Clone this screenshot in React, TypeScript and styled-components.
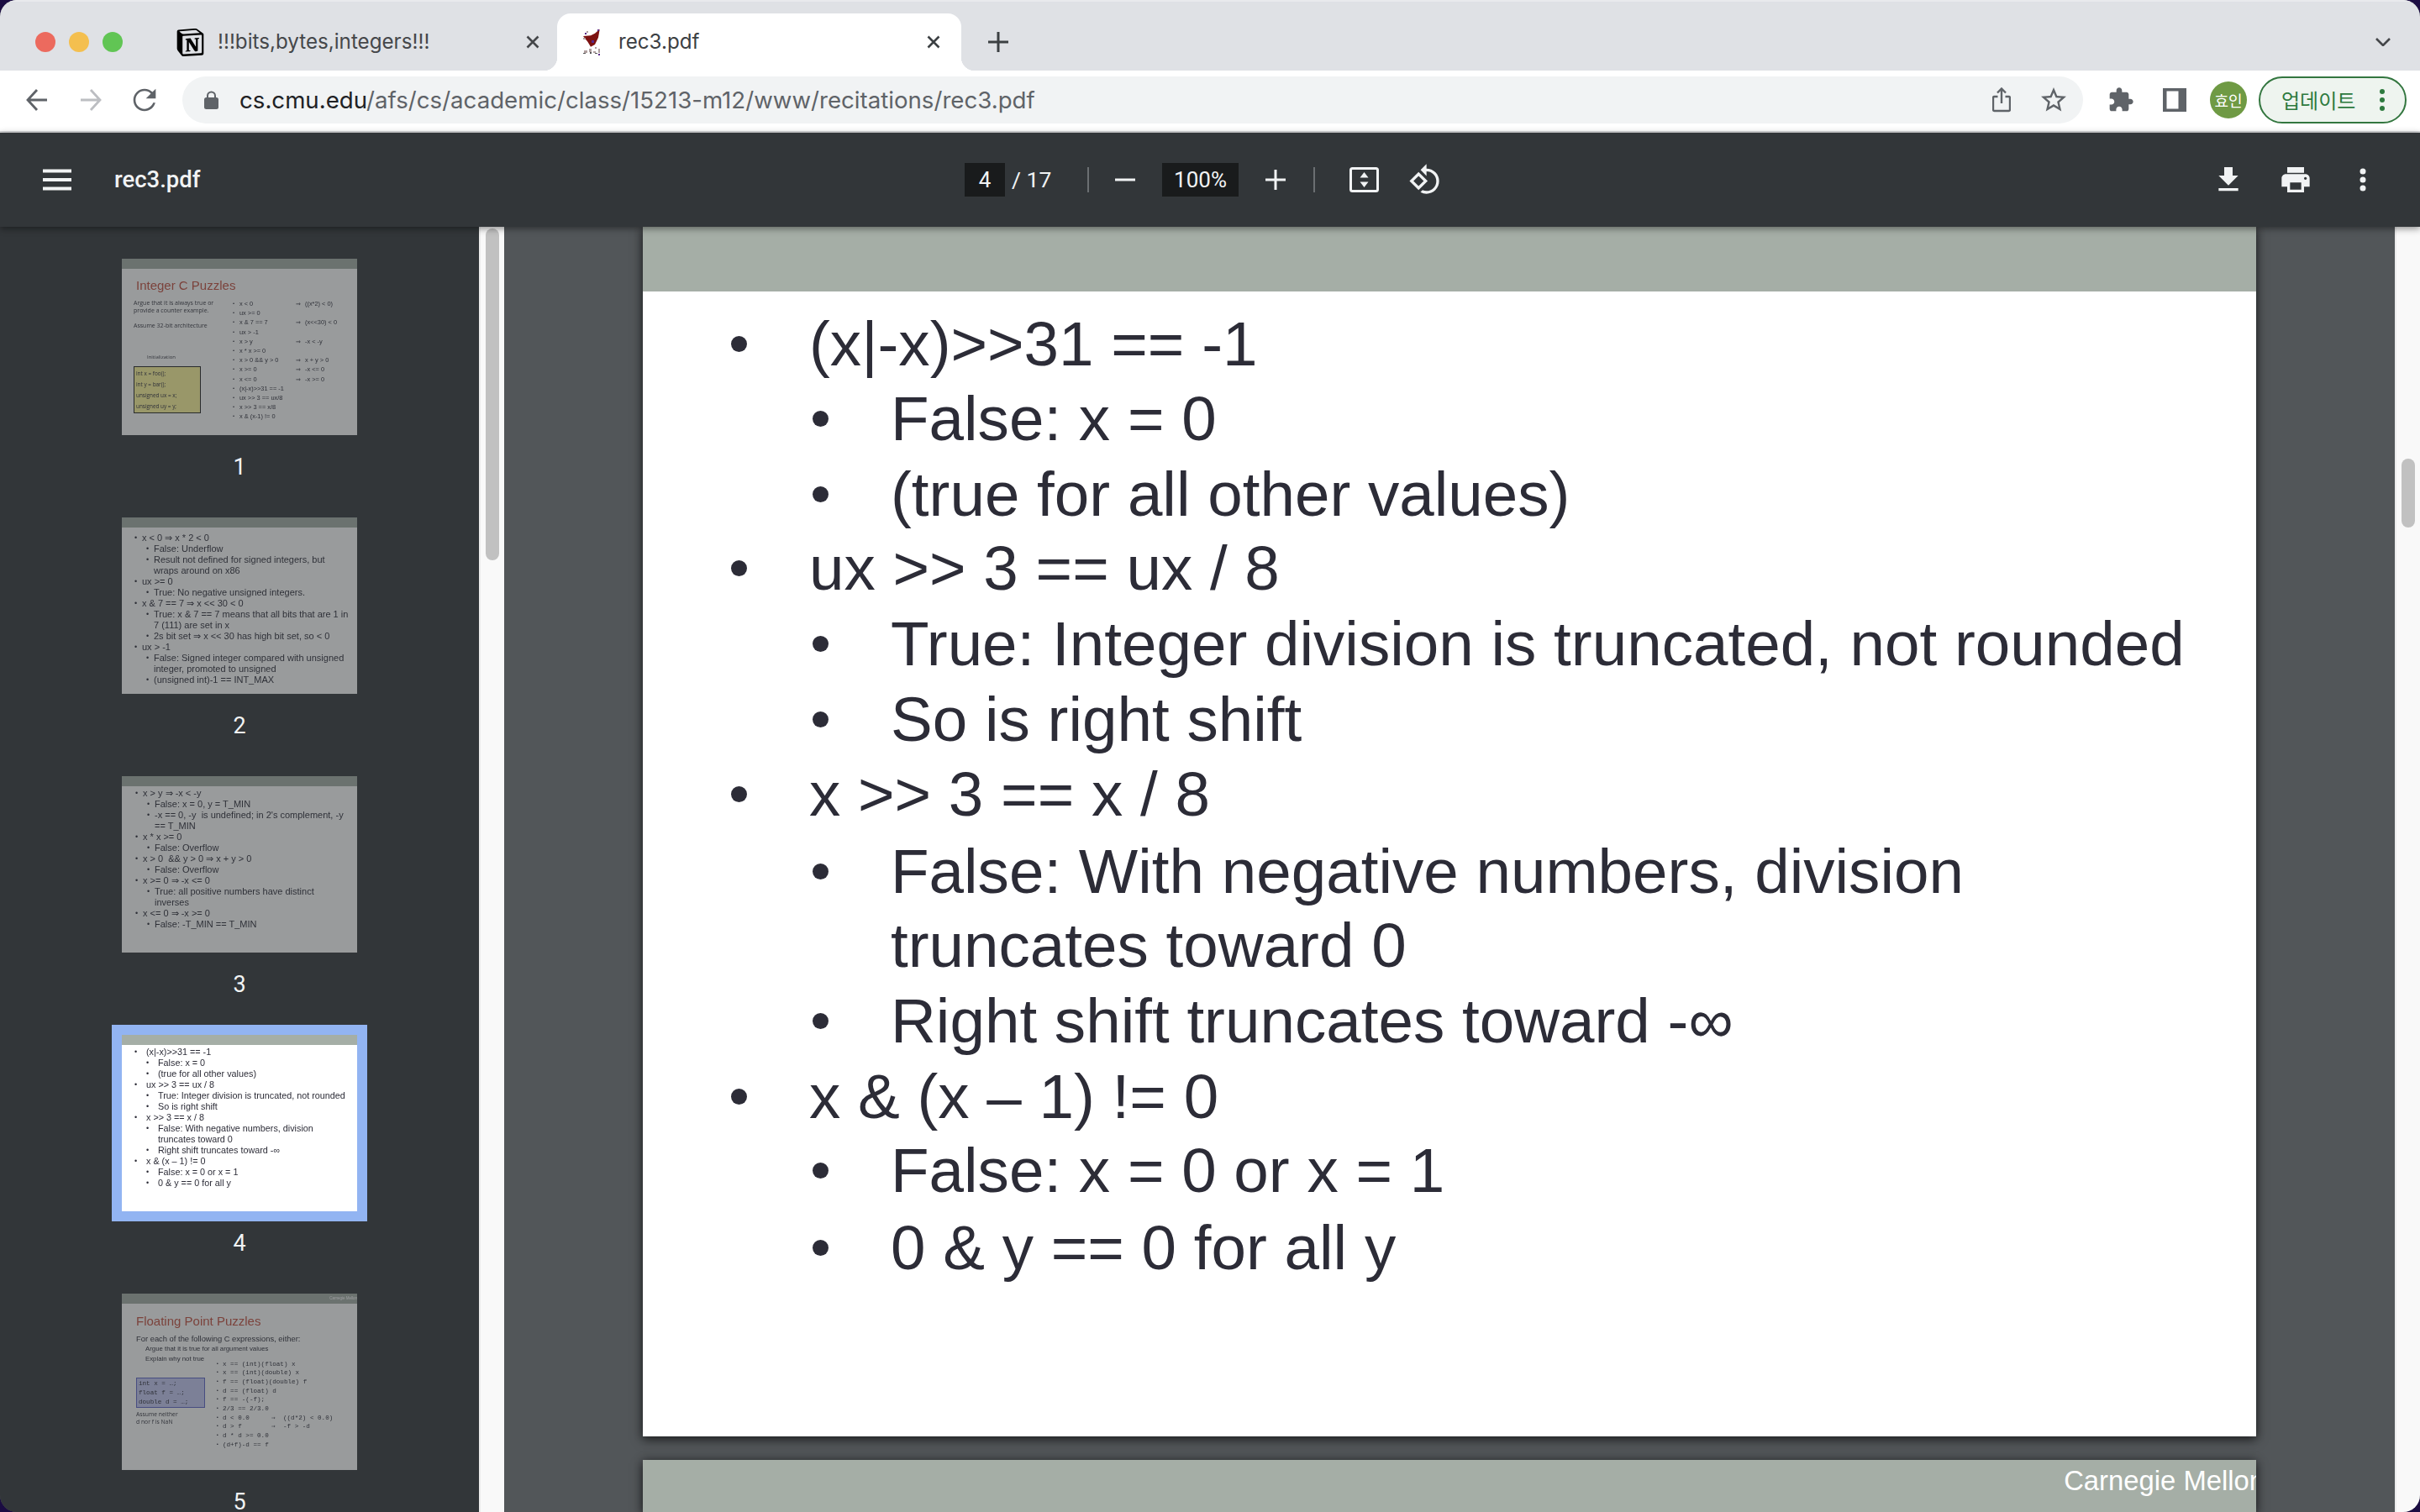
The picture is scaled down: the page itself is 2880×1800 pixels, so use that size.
import React from "react";
import styled, { createGlobalStyle } from "styled-components";
import { SiNotion } from "react-icons/si";

const Global = createGlobalStyle`
  html, body { margin: 0; padding: 0; background: #1b0c42; }
  body { width: 2880px; height: 1800px; overflow: hidden; font-family: "Roboto", "Liberation Sans", sans-serif; }
  * { box-sizing: border-box; }
`;

const Win = styled.div`
  width: 2880px; height: 1800px; border-radius: 20px; overflow: hidden;
  display: flex; flex-direction: column; background: #525659;
`;

/* ---------- tab strip ---------- */
const TabStrip = styled.div`
  height: 84px; flex: none; display: flex; align-items: flex-end; background: #dfe1e5;
  border-top: 2px solid #e9eaed;
`;
const Lights = styled.div`
  display: flex; gap: 16px; align-self: flex-start; margin: 36px 44px 0 42px;
`;
const Light = styled.span<{ $c: string }>`
  width: 24px; height: 24px; border-radius: 50%; background: ${p => p.$c};
`;
const Tab = styled.div<{ $active?: boolean }>`
  width: ${p => (p.$active ? 481 : 473)}px; height: 68px; display: flex; align-items: center;
  padding: ${p => (p.$active ? "0 25px 0 30px" : "0 21px 0 20px")};
  gap: ${p => (p.$active ? 19 : 16)}px;
  position: relative;
  background: ${p => (p.$active ? "#fff" : "transparent")};
  border-radius: 16px 16px 0 0;
  color: ${p => (p.$active ? "#3c4043" : "#45474a")};
  ${p => p.$active && `
    &::before, &::after {
      content: ""; position: absolute; bottom: 0; width: 16px; height: 16px;
    }
    &::before { left: -16px; background: radial-gradient(circle at 0 0, transparent 16px, #fff 16.5px); }
    &::after { right: -16px; background: radial-gradient(circle at 100% 0, transparent 16px, #fff 16.5px); }
  `}
`;
const TabTitle = styled.span`
  flex: 1; font: 400 24.2px/32px "Inter", sans-serif; white-space: nowrap; overflow: hidden;
`;
const NewTab = styled.svg`
  width: 24px; height: 24px; margin: 0 0 22px 32px; flex: none;
`;
const TabMenu = styled.svg`
  width: 18px; height: 10px; margin: 0 35px 29px auto; flex: none;
`;

/* ---------- browser toolbar ---------- */
const BrowserBar = styled.div`
  height: 74px; flex: none; display: flex; align-items: center; background: #fff;
  border-bottom: 2px solid #d8d9db; padding-bottom: 2px;
`;
const NavIcon = styled.svg<{ $w: number; $ml: number }>`
  width: ${p => p.$w}px; height: 40px; margin-left: ${p => p.$ml}px; flex: none;
`;
const Omnibox = styled.div`
  width: 2262px; height: 56px; margin-left: 25px; border-radius: 28px; background: #f1f3f4;
  display: flex; align-items: center; padding-left: 26px; flex: none;
`;
const Url = styled.div`
  font: 400 27.65px/36px "Inter", sans-serif; color: #5f6368; margin-left: 25px; white-space: nowrap;
`;
const Domain = styled.span` color: #202124; `;
const OmniActions = styled.div`
  margin-left: auto; display: flex; align-items: center; padding-right: 17px; gap: 33px;
`;
const BarIcon = styled.svg<{ $s: number; $ml: number }>`
  width: ${p => p.$s}px; height: ${p => p.$s}px; margin-left: ${p => p.$ml}px; flex: none;
`;
const ActionGlyph = styled.svg<{ $w: number; $h: number }>`
  width: ${p => p.$w}px; height: ${p => p.$h}px; flex: none;
`;
const Avatar = styled.div`
  width: 44px; height: 44px; margin-left: 28px; border-radius: 50%; background: #6f9a44; color: #fff; flex: none;
  display: flex; align-items: center; justify-content: center;
  font: 400 18px/44px "Noto Sans CJK KR", sans-serif;
`;
const UpdatePill = styled.div`
  width: 176px; height: 56px; margin-left: 14px; border-radius: 28px; flex: none;
  border: 2px solid #33763f; background: #eef4ef; color: #2d7a3e;
  display: flex; align-items: center; padding-left: 25px;
  font: 400 24px/30px "Noto Sans CJK KR", sans-serif;
`;
const PillDots = styled.svg`
  width: 8px; height: 28px; margin-left: 28px; flex: none;
`;

/* ---------- pdf toolbar ---------- */
const PdfBar = styled.div`
  height: 112px; flex: none; display: flex; align-items: center; background: #323639; color: #f1f3f4;
  position: relative; z-index: 3; box-shadow: 0 2px 8px rgba(0,0,0,.45);
`;
const PdfLeft = styled.div`
  width: 1148px; display: flex; align-items: center; padding-left: 51px; flex: none;
`;
const Burger = styled.svg` width: 34px; height: 26px; flex: none; `;
const DocName = styled.div`
  margin-left: 51px; font: 500 27.5px/36px "Roboto", sans-serif; color: #f1f3f4;
`;
const NumBox = styled.div<{ $w: number; $ml?: number }>`
  width: ${p => p.$w}px; height: 40px; margin-left: ${p => p.$ml ?? 0}px; background: #191b1c; flex: none;
  display: flex; align-items: center; justify-content: center;
  font: 400 26px/40px "Roboto", sans-serif; color: #f1f3f4;
`;
const PageTotal = styled.div`
  width: 48px; margin-left: 8px; flex: none; font: 400 26.5px/40px "Roboto", sans-serif; white-space: nowrap; color: #f1f3f4;
`;
const Sep = styled.div<{ $ml: number }>`
  width: 2px; height: 30px; margin-left: ${p => p.$ml}px; background: #6b6f72; flex: none;
`;
const ToolIcon = styled.svg<{ $w: number; $ml: number }>`
  width: ${p => p.$w}px; height: 40px; margin-left: ${p => p.$ml}px; flex: none;
`;
const PdfRight = styled.div`
  margin-left: auto; padding-right: 48px; display: flex; gap: 40px; align-items: center;
`;
const ActionIcon = styled.svg`
  width: 40px; height: 40px; flex: none;
`;

/* ---------- body ---------- */
const Body = styled.div`
  flex: 1; min-height: 0; display: flex;
`;
const Sidebar = styled.aside`
  width: 570px; flex: none; background: #323639; padding-top: 38px; overflow: hidden;
  display: flex; flex-direction: column; align-items: center;
`;
const ThumbItem = styled.div`
  height: 308px; flex: none; display: flex; flex-direction: column; align-items: center;
`;
const ThumbLabel = styled.div`
  margin-top: 22px; font: 400 27px/32px "Roboto", sans-serif; color: #f1f3f4;
`;
const ThumbFrame = styled.div<{ $on?: boolean }>`
  width: 280px; height: 210px; flex: none; background: #fff; overflow: hidden;
  display: flex; flex-direction: column; color: #2c2c37;
  outline: ${p => (p.$on ? "12px solid #92b4f2" : "none")};
  opacity: ${p => (p.$on ? 1 : 0.5)};
  font-family: "Liberation Sans", sans-serif;
`;
const ThumbBandBox = styled.div`
  height: 12px; flex: none; background: #a5aea6; color: #fff;
  display: flex; justify-content: flex-end; align-items: center; overflow: hidden;
  font: 400 4.5px/8px "Liberation Sans", sans-serif; filter: blur(.3px);
`;
const ThumbBody = styled.div<{ $pt: number }>`
  padding-top: ${p => p.$pt}px; filter: blur(.45px);
`;
const ThumbRow = styled.div<{ $lvl: number; $x: number; $sub: number; $size: number; $h: number }>`
  height: ${p => p.$h}px; display: flex; align-items: center; white-space: pre;
  font-size: ${p => p.$size}px; line-height: ${p => p.$h}px;
  padding-left: ${p => (p.$lvl ? p.$x + p.$sub : p.$x)}px;
`;
const ThumbDot = styled.span<{ $w: number }>`
  width: ${p => p.$w}px; flex: none; font-size: 9px;
`;
const Title = styled.div<{ $size: number; $pt: number; $h: number }>`
  padding: ${p => p.$pt}px 0 0 17px; color: #c4503f; white-space: nowrap;
  font: 400 ${p => p.$size}px/${p => p.$h}px "Liberation Sans", sans-serif; filter: blur(.3px);
`;
const Columns = styled.div<{ $pt: number }>`
  display: flex; padding-top: ${p => p.$pt}px; filter: blur(.45px);
`;
const NoteCol = styled.div<{ $w: number; $pl: number }>`
  width: ${p => p.$w}px; padding-left: ${p => p.$pl}px; flex: none;
`;
const Note = styled.div<{ $mt?: number; $ml?: number; $size?: number }>`
  font: 400 ${p => p.$size ?? 7}px/9px "Open Sans", sans-serif; white-space: nowrap; color: #33333c;
  margin-top: ${p => p.$mt ?? 0}px; margin-left: ${p => p.$ml ?? 0}px;
`;
const InitBox = styled.div`
  width: 80px; height: 56px; margin-top: 6px; background: #fff79a; border: 1.5px solid #222;
  display: flex; flex-direction: column; justify-content: space-around; padding: 1px 2px;
  font: 400 6.4px/10px "Open Sans", sans-serif;
`;
const DeclBox = styled.div`
  width: 82px; height: 36px; margin: 17px 0 3px; background: #c5c9f5; border: 1px solid #5c64c8;
  display: flex; flex-direction: column; justify-content: space-around; padding: 1px 2px;
  font: 400 7.6px/10px "Liberation Mono", monospace;
`;
const PuzzleGrid = styled.div<{ $cols: string; $rh: number; $size: number; $mono?: boolean; $mt?: number }>`
  display: grid; grid-template-columns: ${p => p.$cols}; grid-auto-rows: ${p => p.$rh}px; align-items: center;
  margin-top: ${p => p.$mt ?? 0}px;
  font: 400 ${p => p.$size}px/${p => p.$rh}px ${p => (p.$mono ? '"Liberation Mono", monospace' : '"Liberation Sans", sans-serif')};
  white-space: pre;
`;
const GridDot = styled.span` font-size: 6px; `;
const Tiny = styled.div<{ $size: number; $h: number; $lvl?: number }>`
  font: 400 ${p => p.$size}px/${p => p.$h}px "Liberation Sans", sans-serif; white-space: nowrap;
  padding-left: ${p => (p.$lvl ? 11 : 0)}px;
`;
const TopList = styled.div`
  padding-left: 17px;
`;
const Foot = styled.div`
  display: flex;
`;

const ScrollTrack = styled.div`
  width: 30px; flex: none; background: #f9f9f9; border-left: 2px solid #ececec; position: relative; z-index: 1;
`;
const ScrollThumb = styled.div<{ $mt: number; $h: number }>`
  width: 16px; height: ${p => p.$h}px; margin: ${p => p.$mt}px 0 0 6px; border-radius: 8px; background: #c1c1c1;
`;
const Viewer = styled.main`
  flex: 1; min-width: 0; background: #525659; overflow: hidden; display: flex; flex-direction: column; align-items: center; gap: 28px;
`;
const Page = styled.section`
  width: 1920px; flex: none; background: #fff; box-shadow: 0 4px 12px rgba(0,0,0,.55), 0 0 10px rgba(0,0,0,.3);
`;
const PageBand = styled.div<{ $h: number }>`
  height: ${p => p.$h}px; background: #a5aea6; color: #fff; overflow: hidden;
  display: flex; justify-content: flex-end; align-items: flex-start;
`;
const BandText = styled.span`
  font: 400 32.8px/50px "Liberation Sans", sans-serif; white-space: nowrap; margin-right: -10px;
`;
const SlideBody = styled.div`
  height: 1363px; padding-top: 18px;
`;
const SlideLine = styled.div<{ $lvl: number; $gap: number }>`
  height: 88px; margin-top: ${p => p.$gap}px; display: flex; align-items: center; white-space: pre;
  padding-left: ${p => (p.$lvl ? 202 : 105)}px; color: #2c2c37;
  font: 400 74.6px/88px "Liberation Sans", sans-serif;
`;
const SlideDot = styled.span<{ $show: boolean }>`
  width: 19px; height: 19px; margin-right: 74px; flex: none; border-radius: 50%;
  background: ${p => (p.$show ? "#2c2c37" : "transparent")};
`;
const Favicon = styled.svg`
  width: 24px; height: 32px; flex: none;
`;
const CloseGlyph = styled.svg`
  width: 16px; height: 16px; flex: none;
`;

/* ---------- data ---------- */
const slide: { t: string; l: number; c: number; nb?: boolean }[] = [
  { t: "(x|-x)>>31 == -1", l: 0, c: 408 },
  { t: "False: x = 0", l: 1, c: 497 },
  { t: "(true for all other values)", l: 1, c: 587 },
  { t: "ux >> 3 == ux / 8", l: 0, c: 675 },
  { t: "True: Integer division is truncated, not rounded", l: 1, c: 765 },
  { t: "So is right shift", l: 1, c: 855 },
  { t: "x >> 3 == x / 8", l: 0, c: 944 },
  { t: "False: With negative numbers, division", l: 1, c: 1036 },
  { t: "truncates toward 0", l: 1, c: 1124, nb: true },
  { t: "Right shift truncates toward -∞", l: 1, c: 1214 },
  { t: "x & (x – 1) != 0", l: 0, c: 1304 },
  { t: "False: x = 0 or x = 1", l: 1, c: 1392 },
  { t: "0 & y == 0 for all y", l: 1, c: 1484 },
];

type TL = [string, number, boolean?];
const thumb2: TL[] = [
  ["x < 0 ⇒ x * 2 < 0", 0], ["False: Underflow", 1], ["Result not defined for signed integers, but", 1],
  ["wraps around on x86", 1, true], ["ux >= 0", 0], ["True: No negative unsigned integers.", 1],
  ["x & 7 == 7 ⇒ x << 30 < 0", 0], ["True: x & 7 == 7 means that all bits that are 1 in", 1], ["7 (111) are set in x", 1, true],
  ["2s bit set ⇒ x << 30 has high bit set, so < 0", 1], ["ux > -1", 0], ["False: Signed integer compared with unsigned", 1],
  ["integer, promoted to unsigned", 1, true], ["(unsigned int)-1 == INT_MAX", 1],
];
const thumb3: TL[] = [
  ["x > y ⇒ -x < -y", 0], ["False: x = 0, y = T_MIN", 1], ["-x == 0, -y  is undefined; in 2's complement, -y", 1],
  ["== T_MIN", 1, true], ["x * x >= 0", 0], ["False: Overflow", 1], ["x > 0  && y > 0 ⇒ x + y > 0", 0], ["False: Overflow", 1],
  ["x >= 0 ⇒ -x <= 0", 0], ["True: all positive numbers have distinct", 1], ["inverses", 1, true], ["x <= 0 ⇒ -x >= 0", 0],
  ["False: -T_MIN == T_MIN", 1],
];
const thumb4: TL[] = [
  ["(x|-x)>>31 == -1", 0], ["False: x = 0", 1], ["(true for all other values)", 1], ["ux >> 3 == ux / 8", 0],
  ["True: Integer division is truncated, not rounded", 1], ["So is right shift", 1], ["x >> 3 == x / 8", 0],
  ["False: With negative numbers, division", 1], ["truncates toward 0", 1, true], ["Right shift truncates toward -∞", 1],
  ["x & (x – 1) != 0", 0], ["False: x = 0 or x = 1", 1], ["0 & y == 0 for all y", 1],
];
const puzzles: [string, string?][] = [
  ["x < 0", "((x*2) < 0)"], ["ux >= 0"], ["x & 7 == 7", "(x<<30) < 0"], ["ux > -1"], ["x > y", "-x < -y"], ["x * x >= 0"],
  ["x > 0 && y > 0", "x + y > 0"], ["x >= 0", "-x <= 0"], ["x <= 0", "-x >= 0"], ["(x|-x)>>31 == -1"], ["ux >> 3 == ux/8"],
  ["x >> 3 == x/8"], ["x & (x-1) != 0"],
];
const floats: [string, string?][] = [
  ["x == (int)(float) x"], ["x == (int)(double) x"], ["f == (float)(double) f"], ["d == (float) d"], ["f == -(-f);"],
  ["2/3 == 2/3.0"], ["d < 0.0", "((d*2) < 0.0)"], ["d > f", "-f > -d"], ["d * d >= 0.0"], ["(d+f)-d == f"],
];

const ListThumb = ({ rows, x, dot, sub, pt, size = 11 }: { rows: TL[]; x: number; dot: number; sub: number; pt: number; size?: number }) => (
  <ThumbBody $pt={pt}>
    {rows.map(([t, l, nb], i) => (
      <ThumbRow key={i} $lvl={l} $x={x} $sub={sub} $size={size} $h={13}>
        <ThumbDot $w={dot}>{nb ? "" : "•"}</ThumbDot>{t}
      </ThumbRow>
    ))}
  </ThumbBody>
);

const Thumb1 = () => (
  <>
    <ThumbBandBox />
    <Title $size={15} $pt={10} $h={20}>Integer C Puzzles</Title>
    <Columns $pt={6}>
      <NoteCol $w={132} $pl={14}>
        <Note>Argue that it is always true or</Note>
        <Note>provide a counter example.</Note>
        <Note $mt={9}>Assume 32-bit architecture</Note>
        <Note $mt={29} $ml={16} $size={6}>Initialization</Note>
        <InitBox>
          <span>int x = foo();</span><span>int y = bar();</span><span>unsigned ux = x;</span><span>unsigned uy = y;</span>
        </InitBox>
      </NoteCol>
      <PuzzleGrid $cols="8px 67px 11px 1fr" $rh={11.2} $size={7.4}>
        {puzzles.map(([a, b], i) => (
          <React.Fragment key={i}>
            <GridDot>•</GridDot><span>{a}</span><span>{b ? "⇒" : ""}</span><span>{b ?? ""}</span>
          </React.Fragment>
        ))}
      </PuzzleGrid>
    </Columns>
  </>
);

const Thumb5 = () => (
  <>
    <ThumbBandBox>Carnegie Mellon</ThumbBandBox>
    <Title $size={15} $pt={11} $h={20}>Floating Point Puzzles</Title>
    <Columns $pt={5}>
      <TopList>
        <Tiny $size={9.4} $h={12}>For each of the following C expressions, either:</Tiny>
        <Tiny $size={7.8} $h={11.5} $lvl={1}>Argue that it is true for all argument values</Tiny>
        <Foot>
          <NoteCol $w={95} $pl={0}>
            <Tiny $size={7.8} $h={11.5} $lvl={1}>Explain why not true</Tiny>
            <DeclBox><span>int x = …;</span><span>float f = …;</span><span>double d = …;</span></DeclBox>
            <Note $size={6.8}>Assume neither</Note>
            <Note $size={6.8}>d nor f is NaN</Note>
          </NoteCol>
          <PuzzleGrid $cols="8px 58px 14px 1fr" $rh={10.7} $size={7.6} $mono $mt={7}>
            {floats.map(([a, b], i) => (
              <React.Fragment key={i}>
                <GridDot>•</GridDot><span>{a}</span><span>{b ? "⇒" : ""}</span><span>{b ?? ""}</span>
              </React.Fragment>
            ))}
          </PuzzleGrid>
        </Foot>
      </TopList>
    </Columns>
  </>
);

const CmuIcon = () => (
  <Favicon viewBox="0 0 24 32">
    <path fill="#7d1212" d="M20.700.7L19 10.700 15 19l-5 2.700-3.600-6L1 9l9-.7 5-2.600z" />
    <path fill="#5a2a8a" d="M18 1h2v2h-2zM11 14h3v3h-3zM3 5h2v2H3zM19 30h2v2h-2z" />
    <path fill="#b0a0a0" d="M1 11h3v2H1zM5 3h2v2H5zM2 26h4v3H2zM8 24h3v4H8zM13 27h3v2h-3zM19 24h2v5h-2zM15 22h2v2h-2z" />
    <path fill="#555" d="M1 29h3v1H1zM9 28h2v2H9zM15 29h3v1h-3z" />
  </Favicon>
);
const XIcon = () => (
  <CloseGlyph viewBox="0 0 16 16">
    <path d="M1.500 1.500l13 13M14.500 1.500l-13 13" stroke="currentColor" strokeWidth="2.600" fill="none" />
  </CloseGlyph>
);

export default function App() {
  return (
    <>
      <Global />
      <Win>
        <TabStrip>
          <Lights>
            <Light $c="#ec6a5e" /><Light $c="#f4bf4f" /><Light $c="#61c554" />
          </Lights>
          <Tab>
            <SiNotion size={33} color="#000" style={{ flex: "none" }} />
            <TabTitle>!!!bits,bytes,integers!!!</TabTitle>
            <XIcon />
          </Tab>
          <Tab $active>
            <CmuIcon />
            <TabTitle>rec3.pdf</TabTitle>
            <XIcon />
          </Tab>
          <NewTab viewBox="0 0 24 24"><path d="M12 0v24M0 12h24" stroke="#3c4043" strokeWidth="3" /></NewTab>
          <TabMenu viewBox="0 0 18 10"><path d="M1 1l8 8 8-8" stroke="#45474a" strokeWidth="2.600" fill="none" /></TabMenu>
        </TabStrip>

        <BrowserBar>
          <NavIcon $w={26} $ml={31} viewBox="0 0 26 40">
            <path d="M25 20H3M13 8L2 20l11 12" stroke="#5f6368" strokeWidth="2.800" fill="none" />
          </NavIcon>
          <NavIcon $w={26} $ml={38} viewBox="0 0 26 40">
            <path d="M1 20h22M13 8l11 12-11 12" stroke="#bcbec2" strokeWidth="2.800" fill="none" />
          </NavIcon>
          <NavIcon $w={40} $ml={31} viewBox="0 0 24 24">
            <path fill="#5f6368" d="M17.650 6.350C16.200 4.900 14.210 4 12 4c-4.420 0-7.990 3.580-7.990 8s3.570 8 7.990 8c3.730 0 6.840-2.550 7.730-6h-1.600c-.82 2.330-3.240 4.400-6.130 4.400-3.530 0-6.400-2.870-6.400-6.400S8.470 5.600 12 5.600c1.780 0 3.300.74 4.500 1.900L13 11h7V4l-2.350 2.350z" />
          </NavIcon>
          <Omnibox>
            <ActionGlyph $w={17} $h={22} viewBox="0 0 17 22">
              <path d="M4 9V6a4.500 4.500 0 0 1 9 0v3" fill="none" stroke="#5f6368" strokeWidth="2" />
              <rect x="0" y="8" width="17" height="14" rx="2.500" fill="#5f6368" />
            </ActionGlyph>
            <Url><Domain>cs.cmu.edu</Domain>/afs/cs/academic/class/15213-m12/www/recitations/rec3.pdf</Url>
            <OmniActions>
              <ActionGlyph $w={22} $h={30} viewBox="0 0 22 30">
                <path d="M6.500 11H2.500A1.500 1.500 0 0 0 1 12.500v14A1.500 1.500 0 0 0 2.500 28h17a1.500 1.500 0 0 0 1.500-1.500v-14A1.500 1.500 0 0 0 19.500 11H15.500M11 19V2M6 6.500l5-5 5 5" fill="none" stroke="#5f6368" strokeWidth="2.400" />
              </ActionGlyph>
              <ActionGlyph $w={36} $h={36} viewBox="0 0 24 24">
                <path fill="#5f6368" d="M22 9.240l-7.190-.62L12 2 9.190 8.630 2 9.240l5.460 4.730L5.820 21 12 17.270 18.180 21l-1.630-7.030L22 9.240zM12 15.400l-3.760 2.270 1-4.280-3.320-2.880 4.380-.38L12 6.100l1.710 4.040 4.380.38-3.320 2.880 1 4.280L12 15.400z" />
              </ActionGlyph>
            </OmniActions>
          </Omnibox>
          <BarIcon $s={32} $ml={29} viewBox="0 0 24 24">
            <path fill="#5f6368" d="M20.500 11H19V7c0-1.100-.9-2-2-2h-4V3.500C13 2.120 11.880 1 10.500 1S8 2.120 8 3.500V5H4c-1.100 0-1.990.9-1.990 2v3.800H3.500c1.490 0 2.700 1.210 2.700 2.700s-1.210 2.700-2.700 2.700H2V20c0 1.100.9 2 2 2h3.800v-1.500c0-1.490 1.210-2.700 2.700-2.700 1.490 0 2.700 1.210 2.700 2.700V22H17c1.100 0 2-.9 2-2v-4h1.500c1.380 0 2.500-1.120 2.500-2.500S21.880 11 20.500 11z" />
          </BarIcon>
          <BarIcon $s={28} $ml={34} viewBox="0 0 28 28">
            <rect width="28" height="28" fill="#5f6368" />
            <rect x="4.500" y="3.500" width="14" height="21" fill="#fff" />
          </BarIcon>
          <Avatar>효인</Avatar>
          <UpdatePill>
            업데이트
            <PillDots viewBox="0 0 8 28"><circle cx="4" cy="4" r="3" fill="#2d7a3e" /><circle cx="4" cy="14" r="3" fill="#2d7a3e" /><circle cx="4" cy="24" r="3" fill="#2d7a3e" /></PillDots>
          </UpdatePill>
        </BrowserBar>

        <PdfBar>
          <PdfLeft>
            <Burger viewBox="0 0 34 26"><path d="M0 2.500h34M0 13h34M0 23.500h34" stroke="#f1f3f4" strokeWidth="4" /></Burger>
            <DocName>rec3.pdf</DocName>
          </PdfLeft>
          <NumBox $w={48}>4</NumBox>
          <PageTotal>/  17</PageTotal>
          <Sep $ml={42} />
          <ToolIcon $w={24} $ml={31} viewBox="0 0 24 40"><path d="M0 20h24" stroke="#f1f3f4" strokeWidth="3" /></ToolIcon>
          <NumBox $w={91} $ml={32}>100%</NumBox>
          <ToolIcon $w={24} $ml={32} viewBox="0 0 24 40"><path d="M0 20h24M12 8v24" stroke="#f1f3f4" strokeWidth="3" /></ToolIcon>
          <Sep $ml={33} />
          <ToolIcon $w={35} $ml={41} viewBox="0 0 35 40">
            <rect x="1.500" y="6.500" width="32" height="27" rx="2" fill="none" stroke="#f1f3f4" strokeWidth="3" />
            <path d="M17.500 11l5 6.500h-10zM17.500 29l-5-6.500h10z" fill="#f1f3f4" />
          </ToolIcon>
          <ToolIcon $w={40} $ml={35} viewBox="0 0 24 24">
            <path fill="#f1f3f4" d="M7.340 6.410L.86 12.900l6.490 6.480 6.490-6.480-6.500-6.490zM3.690 12.900l3.660-3.660L11 12.900l-3.660 3.660-3.650-3.660zm15.670-6.260C17.610 4.880 15.300 4 13 4V.76L8.760 5 13 9.240V6c1.790 0 3.580.68 4.950 2.050 2.730 2.730 2.730 7.170 0 9.900C16.580 19.320 14.790 20 13 20c-.97 0-1.940-.21-2.840-.61l-1.490 1.490C10.020 21.620 11.510 22 13 22c2.300 0 4.610-.88 6.360-2.640 3.520-3.510 3.520-9.210 0-12.720z" />
          </ToolIcon>
          <PdfRight>
            <ActionIcon viewBox="0 0 24 24"><path fill="#f1f3f4" d="M19 9h-4V3H9v6H5l7 7 7-7zM5 18v2h14v-2H5z" /></ActionIcon>
            <ActionIcon viewBox="0 0 24 24"><path fill="#f1f3f4" d="M19 8H5c-1.660 0-3 1.340-3 3v6h4v4h12v-4h4v-6c0-1.660-1.340-3-3-3zm-3 11H8v-5h8v5zm3-7c-.55 0-1-.45-1-1s.45-1 1-1 1 .45 1 1-.45 1-1 1zm-1-9H6v4h12V3z" /></ActionIcon>
            <ActionIcon viewBox="0 0 40 40"><circle cx="20" cy="10" r="3.500" fill="#f1f3f4" /><circle cx="20" cy="20" r="3.500" fill="#f1f3f4" /><circle cx="20" cy="30" r="3.500" fill="#f1f3f4" /></ActionIcon>
          </PdfRight>
        </PdfBar>

        <Body>
          <Sidebar>
            <ThumbItem>
              <ThumbFrame><Thumb1 /></ThumbFrame>
              <ThumbLabel>1</ThumbLabel>
            </ThumbItem>
            <ThumbItem>
              <ThumbFrame><ThumbBandBox /><ListThumb rows={thumb2} x={15} dot={9} sub={14} pt={6} /></ThumbFrame>
              <ThumbLabel>2</ThumbLabel>
            </ThumbItem>
            <ThumbItem>
              <ThumbFrame><ThumbBandBox /><ListThumb rows={thumb3} x={16} dot={9} sub={14} pt={2} /></ThumbFrame>
              <ThumbLabel>3</ThumbLabel>
            </ThumbItem>
            <ThumbItem>
              <ThumbFrame $on><ThumbBandBox /><ListThumb rows={thumb4} x={15} dot={14} sub={14} pt={2} size={10.8} /></ThumbFrame>
              <ThumbLabel>4</ThumbLabel>
            </ThumbItem>
            <ThumbItem>
              <ThumbFrame><Thumb5 /></ThumbFrame>
              <ThumbLabel>5</ThumbLabel>
            </ThumbItem>
          </Sidebar>
          <ScrollTrack><ScrollThumb $mt={2} $h={395} /></ScrollTrack>
          <Viewer>
            <Page>
              <PageBand $h={77} />
              <SlideBody>
                {slide.map((s, i) => (
                  <SlideLine key={i} $lvl={s.l} $gap={i ? s.c - slide[i - 1].c - 88 : 0}>
                    <SlideDot $show={!s.nb} />{s.t}
                  </SlideLine>
                ))}
              </SlideBody>
            </Page>
            <Page>
              <PageBand $h={62}><BandText>Carnegie Mellon</BandText></PageBand>
            </Page>
          </Viewer>
          <ScrollTrack><ScrollThumb $mt={276} $h={82} /></ScrollTrack>
        </Body>
      </Win>
    </>
  );
}
